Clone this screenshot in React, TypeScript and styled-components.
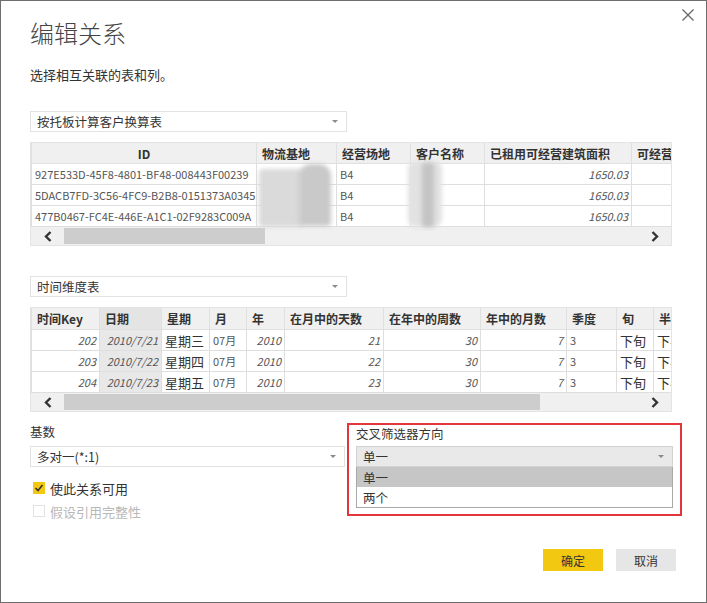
import styled, { createGlobalStyle } from "styled-components";

const GlobalStyle = createGlobalStyle`
  html, body {
    margin: 0;
    padding: 0;
    background: #fff;
  }
  body {
    font-family: "Noto Sans CJK SC", "Noto Sans", sans-serif;
    color: #333;
  }
`;

const Dialog = styled.div`
  width: 707px;
  height: 603px;
  box-sizing: border-box;
  border: 1px solid #6e6e6e;
  background: #fff;
  padding-left: 29px;
  display: flex;
  flex-direction: column;
  overflow: hidden;
`;

const Header = styled.div`
  display: flex;
  justify-content: space-between;
  align-items: flex-start;
  padding-right: 11px;
`;

const Title = styled.h1`
  margin: 17px 0 0;
  font-size: 24px;
  line-height: 30px;
  font-weight: 300;
  color: #444;
`;

const Close = styled.button`
  margin-top: 7px;
  width: 14px;
  height: 14px;
  padding: 0;
  border: none;
  background: none;
  display: flex;
`;

const Subtitle = styled.p`
  margin: 19px 0 0;
  font-size: 13px;
  line-height: 16px;
  color: #333;
`;

const Select = styled.div<{ $w: number; $bg?: string; $top?: number }>`
  width: ${(p) => p.$w}px;
  height: 21px;
  box-sizing: border-box;
  margin-top: ${(p) => p.$top ?? 0}px;
  border: 1px solid ${(p) => (p.$bg ? "#d2d2d2" : "#e2e2e2")};
  background: ${(p) => p.$bg ?? "#fff"};
  display: flex;
  align-items: center;
  justify-content: space-between;
  padding: 0 8px 0 6px;
  font-size: 12.5px;
  color: #333;
`;

const Caret = styled.span`
  width: 0;
  height: 0;
  border-left: 3px solid transparent;
  border-right: 3px solid transparent;
  border-top: 3px solid #8a8a8a;
`;

const TableBox = styled.div<{ $top: number }>`
  position: relative;
  width: 642px;
  margin-top: ${(p) => p.$top}px;
  border: 1px solid #e4e4e4;
  box-sizing: border-box;
  overflow: hidden;
`;

const Grid = styled.table<{ $w: number }>`
  border-collapse: collapse;
  table-layout: fixed;
  width: ${(p) => p.$w}px;
`;

const Th = styled.th<{ $align: string; $hl?: boolean; $h: number }>`
  height: ${(p) => p.$h}px;
  padding: 0 5px;
  background: ${(p) => (p.$hl ? "#e4e4e4" : "#f0f0f0")};
  border: 1px solid #e0e0e0;
  border-top: none;
  font-size: 12px;
  font-weight: 700;
  color: #333;
  text-align: ${(p) => p.$align};
  white-space: nowrap;
  overflow: hidden;
`;

const Td = styled.td<{ $align: string; $italic?: boolean; $cjk?: boolean; $hl?: boolean }>`
  height: 20px;
  padding: 0 3px;
  background: ${(p) => (p.$hl ? "#e8e8e8" : "#fff")};
  border: 1px solid #dedede;
  font-size: ${(p) => (p.$cjk ? "13px" : "11px")};
  font-style: ${(p) => (p.$italic ? "italic" : "normal")};
  color: ${(p) => (p.$cjk ? "#333" : "#555")};
  text-align: ${(p) => p.$align};
  white-space: nowrap;
  overflow: hidden;
`;

const ScrollBar = styled.div`
  height: 18px;
  background: #f0f0f0;
  display: flex;
  align-items: center;
`;

const ArrowBtn = styled.div`
  width: 33px;
  height: 18px;
  display: flex;
  align-items: center;
  justify-content: center;
`;

const Thumb = styled.div`
  height: 16px;
  background: #cdcdcd;
`;

const Smudge = styled.div<{ $l: number; $t: number; $w: number; $h: number; $c: string; $r?: string }>`
  position: absolute;
  left: ${(p) => p.$l}px;
  top: ${(p) => p.$t}px;
  width: ${(p) => p.$w}px;
  height: ${(p) => p.$h}px;
  background: ${(p) => p.$c};
  border-radius: ${(p) => p.$r ?? "4px"};
  filter: blur(2px);
`;

const Bottom = styled.div`
  display: flex;
  margin-top: 11px;
`;

const LeftCol = styled.div`
  width: 317px;
  display: flex;
  flex-direction: column;
`;

const FilterBox = styled.div`
  width: 335px;
  height: 93px;
  box-sizing: border-box;
  border: 2px solid #e2353c;
  padding: 0 7px;
`;

const Label = styled.div`
  margin-top: 1px;
  font-size: 12.5px;
  line-height: 16px;
  color: #333;
`;

const CheckRow = styled.div<{ $off?: boolean; $top: number }>`
  display: flex;
  align-items: center;
  gap: 5px;
  height: 22px;
  margin-top: ${(p) => p.$top}px;
  padding-left: 3px;
  font-size: 13px;
  color: ${(p) => (p.$off ? "#b8b8b8" : "#333")};
`;

const Box = styled.span<{ $on?: boolean }>`
  width: 12px;
  height: 12px;
  box-sizing: border-box;
  background: ${(p) => (p.$on ? "#f2c811" : "#fff")};
  border: 1px solid ${(p) => (p.$on ? "#f2c811" : "#e2e2e2")};
  display: flex;
  align-items: center;
  justify-content: center;
`;

const ListBox = styled.div`
  width: 317px;
  box-sizing: border-box;
  border: 1px solid #a8a8a8;
  border-top: none;
`;

const ListItem = styled.div<{ $sel?: boolean }>`
  height: 20px;
  padding-left: 6px;
  display: flex;
  align-items: center;
  font-size: 12.5px;
  color: #333;
  background: ${(p) => (p.$sel ? "#c6c6c6" : "#fff")};
`;

const Footer = styled.div`
  display: flex;
  justify-content: flex-end;
  gap: 13px;
  margin-top: 27px;
  padding-right: 30px;
`;

const Button = styled.button<{ $primary?: boolean }>`
  width: 60px;
  height: 22px;
  border: none;
  padding: 0;
  font-family: inherit;
  font-size: 12px;
  color: #333;
  background: ${(p) => (p.$primary ? "#f2c811" : "#e6e6e6")};
`;

type Col = {
  title: string;
  width: number;
  align: string;
  headAlign?: string;
  italic?: boolean;
  cjk?: boolean;
  hl?: boolean;
};

const Chevron = ({ right }: { right?: boolean }) => (
  <svg width="8" height="11" viewBox="0 0 8 11">
    <polyline
      points={right ? "1.5,1 6,5.5 1.5,10" : "6.5,1 2,5.5 6.5,10"}
      fill="none"
      stroke="#333"
      strokeWidth="2.4"
    />
  </svg>
);

const DataTable = ({
  cols,
  rows,
  headH,
  top,
  thumb,
  children,
}: {
  cols: Col[];
  rows: (string | number)[][];
  headH: number;
  top: number;
  thumb: number;
  children?: React.ReactNode;
}) => (
  <TableBox $top={top}>
    <Grid $w={cols.reduce((s, c) => s + c.width, 0)}>
      <colgroup>
        {cols.map((c, i) => (
          <col key={i} style={{ width: c.width }} />
        ))}
      </colgroup>
      <thead>
        <tr>
          {cols.map((c, i) => (
            <Th key={i} $h={headH} $align={c.headAlign ?? "left"} $hl={c.hl}>
              {c.title}
            </Th>
          ))}
        </tr>
      </thead>
      <tbody>
        {rows.map((r, i) => (
          <tr key={i}>
            {cols.map((c, j) => (
              <Td key={j} $align={c.align} $italic={c.italic} $cjk={c.cjk} $hl={c.hl}>
                {r[j]}
              </Td>
            ))}
          </tr>
        ))}
      </tbody>
    </Grid>
    <ScrollBar>
      <ArrowBtn>
        <Chevron />
      </ArrowBtn>
      <Thumb style={{ width: thumb }} />
      <div style={{ flex: 1 }} />
      <ArrowBtn>
        <Chevron right />
      </ArrowBtn>
    </ScrollBar>
    {children}
  </TableBox>
);

const cols1: Col[] = [
  { title: "ID", width: 225, align: "left", headAlign: "center" },
  { title: "物流基地", width: 80, align: "left" },
  { title: "经营场地", width: 74, align: "left" },
  { title: "客户名称", width: 74, align: "left" },
  { title: "已租用可经营建筑面积", width: 147, align: "right", italic: true },
  { title: "可经营建筑面积", width: 80, align: "right", italic: true },
];

const rows1 = [
  ["927E533D-45F8-4801-BF48-008443F00239", "", "B4", "", "1650.03", ""],
  ["5DACB7FD-3C56-4FC9-B2B8-0151373A0345", "", "B4", "", "1650.03", ""],
  ["477B0467-FC4E-446E-A1C1-02F9283C009A", "", "B4", "", "1650.03", ""],
];

const cols2: Col[] = [
  { title: "时间Key", width: 68, align: "right", italic: true },
  { title: "日期", width: 62, align: "right", italic: true, hl: true },
  { title: "星期", width: 48, align: "left", cjk: true },
  { title: "月", width: 37, align: "left" },
  { title: "年", width: 38, align: "right", italic: true },
  { title: "在月中的天数", width: 99, align: "right", italic: true },
  { title: "在年中的周数", width: 97, align: "right", italic: true },
  { title: "年中的月数", width: 86, align: "right", italic: true },
  { title: "季度", width: 50, align: "left" },
  { title: "旬", width: 37, align: "left", cjk: true },
  { title: "半年", width: 50, align: "left", cjk: true },
];

const rows2 = [
  [202, "2010/7/21", "星期三", "07月", 2010, 21, 30, 7, 3, "下旬", "下半年"],
  [203, "2010/7/22", "星期四", "07月", 2010, 22, 30, 7, 3, "下旬", "下半年"],
  [204, "2010/7/23", "星期五", "07月", 2010, 23, 30, 7, 3, "下旬", "下半年"],
];

export default function App() {
  return (
    <>
      <GlobalStyle />
      <Dialog>
        <Header>
          <Title>编辑关系</Title>
          <Close aria-label="关闭">
            <svg width="14" height="14" viewBox="0 0 14 14">
              <path d="M1.5 1.5 L12.5 12.5 M12.5 1.5 L1.5 12.5" stroke="#666" strokeWidth="1.3" />
            </svg>
          </Close>
        </Header>
        <Subtitle>选择相互关联的表和列。</Subtitle>

        <Select $w={317} $top={28}>
          按托板计算客户换算表
          <Caret />
        </Select>
        <DataTable cols={cols1} rows={rows1} headH={20} top={10} thumb={201}>
          <Smudge $l={228} $t={26} $w={44} $h={58} $c="#dadada" />
          <Smudge $l={268} $t={21} $w={32} $h={62} $c="#c9c9c9" $r="12px 12px 4px 4px" />
          <Smudge $l={377} $t={18} $w={34} $h={66} $c="#e2e2e2" $r="8px" />
          <Smudge $l={391} $t={20} $w={12} $h={64} $c="#c4c4c4" $r="3px" />
        </DataTable>

        <Select $w={317} $top={30}>
          时间维度表
          <Caret />
        </Select>
        <DataTable cols={cols2} rows={rows2} headH={21} top={10} thumb={476} />

        <Bottom>
          <LeftCol>
            <Label>基数</Label>
            <Select $w={315} $top={6}>
              多对一(*:1)
              <Caret />
            </Select>
            <CheckRow $top={10}>
              <Box $on>
                <svg width="10" height="10" viewBox="0 0 10 10">
                  <polyline points="1.5,5 4,7.5 8.5,2" fill="none" stroke="#333" strokeWidth="1.6" />
                </svg>
              </Box>
              使此关系可用
            </CheckRow>
            <CheckRow $off $top={1}>
              <Box />
              假设引用完整性
            </CheckRow>
          </LeftCol>
          <FilterBox>
            <Label>交叉筛选器方向</Label>
            <Select $w={317} $top={4} $bg="#e9e9e9">
              单一
              <Caret />
            </Select>
            <ListBox>
              <ListItem $sel>单一</ListItem>
              <ListItem>两个</ListItem>
            </ListBox>
          </FilterBox>
        </Bottom>

        <Footer>
          <Button $primary>确定</Button>
          <Button>取消</Button>
        </Footer>
      </Dialog>
    </>
  );
}
